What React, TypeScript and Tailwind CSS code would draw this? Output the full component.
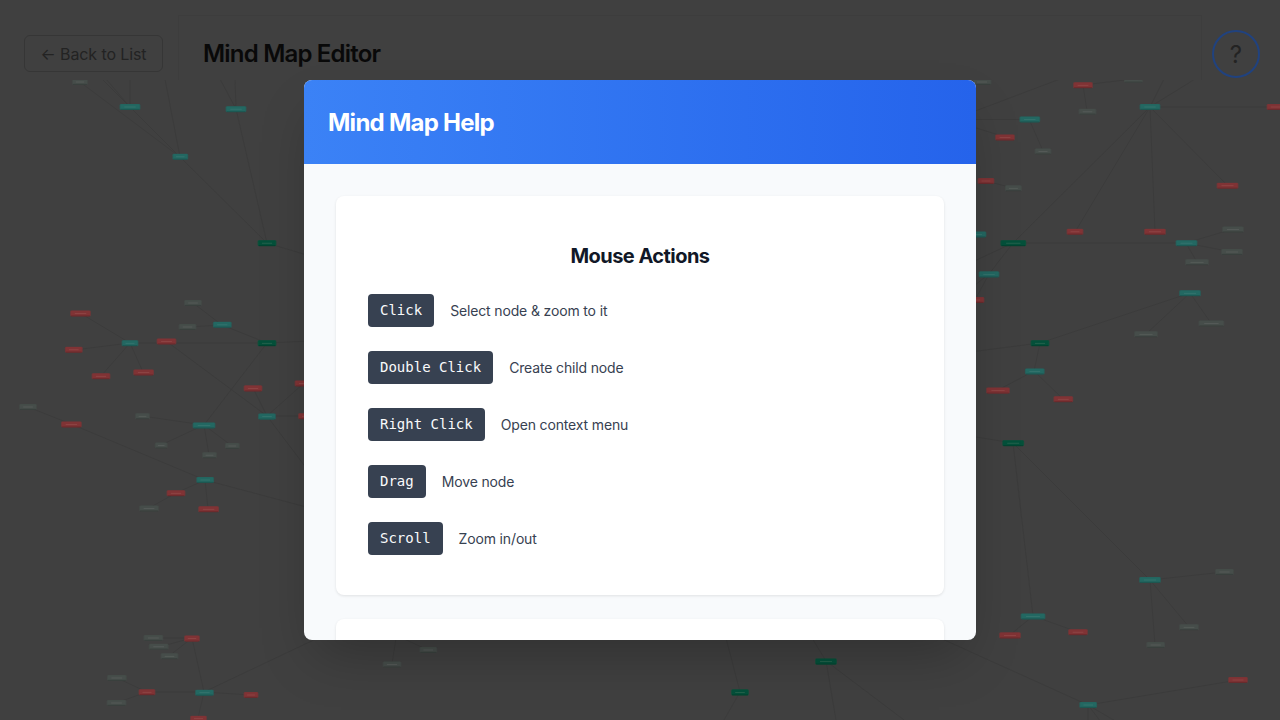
type Kind = 'g' | 't' | 'r' | 'n';
type MapNode = [x: number, y: number, width: number, kind: Kind];
type Edge = [number, number, number, number];

const FILLS: Record<Kind, string> = {
  g: '#04503a',
  t: '#236862',
  r: '#803335',
  n: '#464d4a',
};
const RIMS: Record<Kind, string> = {
  g: '#12503b',
  t: '#295c58',
  r: '#6e3738',
  n: '#434946',
};
const LABELS: Record<Kind, string> = {
  g: '#2b6650',
  t: '#38756f',
  r: '#904848',
  n: '#585e5b',
};

const NODES: MapNode[] = [
  [80, 82, 14, 'n'], [130, 107, 19, 't'], [180.3, 156.8, 14, 't'], [236, 109.2, 19, 't'],
  [267, 243.2, 17, 'g'], [80.5, 313.5, 19, 'r'], [73.8, 349.8, 16, 'r'], [130, 343.3, 15, 't'],
  [166.5, 341.5, 18, 'r'], [193, 303, 16, 'n'], [187.5, 327, 16, 'n'], [222.3, 324.8, 17, 't'],
  [267, 343.3, 17, 'g'], [101, 376.3, 17, 'r'], [143.6, 372.5, 19, 'r'], [28, 407, 16, 'n'],
  [71.4, 424.5, 19, 'r'], [142.5, 416.3, 13, 'n'], [204, 425.5, 21, 't'], [161.2, 445.5, 11, 'n'],
  [209.5, 455.2, 13, 'n'], [232.3, 446, 13, 'n'], [205.2, 480, 16, 't'], [176, 493.3, 17, 'r'],
  [149, 508.5, 18, 'n'], [208.6, 509.3, 19, 'r'], [253, 388.4, 17, 'r'], [267, 416.6, 16, 't'],
  [304, 383.5, 17, 'r'], [306.5, 416.2, 15, 'r'], [153.4, 638, 18, 'n'], [158.7, 646.8, 18, 'n'],
  [169.5, 656.3, 16, 'n'], [192, 638.6, 14, 'r'], [116.8, 678, 18, 'n'], [116.5, 703, 18, 'n'],
  [147, 692.3, 15, 'r'], [204.5, 692.7, 17, 't'], [251, 695, 13, 'r'], [198.5, 718.7, 15, 'r'],
  [982, 82, 17, 'n'], [1083, 85.3, 18, 'r'], [1133.4, 79.7, 17, 'n'], [1087.5, 111.8, 16, 'n'],
  [1029.8, 119.5, 19, 't'], [1005, 137.5, 18, 'r'], [1043, 151.5, 15, 'n'], [1150, 107, 19, 't'],
  [1276, 107, 17, 'r'], [986, 181, 15, 'r'], [1013.4, 188.3, 15, 'n'], [1227.5, 185.7, 20, 'r'],
  [1075, 231.8, 15, 'r'], [1155, 231.8, 20, 'r'], [977, 234.5, 17, 't'], [1013.3, 243.2, 24, 'g'],
  [1186.5, 243.2, 20, 't'], [1233, 229.5, 20, 'n'], [1232, 252, 20, 'n'], [1197, 262.3, 22, 'n'],
  [989, 274.4, 19, 't'], [975, 300, 17, 'r'], [1190, 293.3, 20, 't'], [1211.4, 323.5, 24, 'n'],
  [1146, 334.3, 22, 'n'], [1040, 343.3, 17, 'g'], [1034.8, 371.5, 18, 't'], [998, 390.6, 22, 'r'],
  [1063.3, 399.3, 18, 'r'], [1013.2, 443.2, 20, 'g'], [1150, 580, 20, 't'], [1224.5, 572, 17, 'n'],
  [1189, 627.3, 18, 'n'], [1155.7, 645, 17, 'n'], [1033, 616.5, 23, 't'], [1010, 635.4, 20, 'r'],
  [1078, 632.2, 18, 'r'], [1238, 680, 18, 'r'], [1088.2, 705, 16, 't'], [428.3, 650, 16, 'n'],
  [392, 664.5, 17, 'n'], [740, 692.4, 16, 'g'], [826, 661.6, 20, 'g'],
];

const EDGES: Edge[] = [
  [80, 82, 180, 157], [102, 79, 180, 157], [106, 79, 130, 107], [130, 79, 130, 107],
  [165, 79, 180, 157], [220, 79, 236, 109], [235, 79, 236, 109], [180, 157, 267, 243],
  [236, 109, 267, 243], [267, 243, 310, 256], [80, 313, 130, 343], [74, 350, 130, 343],
  [130, 343, 267, 343], [130, 343, 101, 376], [130, 343, 143, 372], [166, 341, 267, 416],
  [193, 303, 222, 325], [187, 327, 222, 325], [222, 325, 267, 343], [267, 343, 310, 341],
  [267, 343, 204, 425], [28, 407, 71, 424], [71, 424, 205, 480], [142, 416, 204, 425],
  [161, 445, 204, 425], [209, 455, 204, 425], [232, 446, 204, 425], [205, 480, 176, 493],
  [176, 493, 149, 508], [205, 480, 208, 509], [205, 480, 310, 508], [253, 388, 267, 416],
  [304, 383, 267, 416], [267, 416, 306, 416], [267, 416, 310, 473], [153, 638, 192, 638],
  [159, 647, 192, 638], [169, 656, 192, 638], [192, 638, 204, 692], [117, 678, 147, 692],
  [116, 703, 147, 692], [147, 692, 204, 692], [204, 692, 251, 695], [204, 692, 198, 718],
  [204, 692, 318, 638], [396, 638, 392, 664], [402, 638, 428, 650], [726, 638, 740, 692],
  [740, 692, 724, 720], [812, 638, 826, 661], [826, 661, 836, 720], [826, 661, 904, 720],
  [940, 638, 1088, 705], [970, 113, 1060, 79], [970, 119.5, 1029, 119.5], [970, 126, 1005, 137],
  [1029, 119, 1043, 151], [1083, 85, 1133, 79], [1083, 85, 1087, 111], [1164, 79, 1150, 107],
  [1195, 79, 1150, 107], [1150, 107, 1276, 107], [1150, 107, 1013, 243], [1150, 107, 1075, 232],
  [1150, 107, 1155, 232], [1150, 107, 1227, 185], [986, 181, 1013, 188], [1013, 243, 1186, 243],
  [1013, 243, 970, 263], [1013, 243, 989, 274], [989, 274, 970, 289], [989, 274, 975, 300],
  [1186, 243, 1233, 229], [1186, 243, 1232, 252], [1186, 243, 1197, 262], [1190, 293, 1211, 323],
  [1190, 293, 1146, 334], [1190, 293, 1040, 343], [1040, 343, 970, 352], [1040, 343, 1034, 371],
  [1034, 371, 998, 390], [1034, 371, 1063, 399], [970, 436, 1013, 443], [1013, 443, 1033, 616],
  [1013, 443, 1150, 580], [1150, 580, 1224, 572], [1150, 580, 1189, 627], [1150, 580, 1155, 645],
  [1033, 616, 1010, 635], [1033, 616, 1078, 632], [1088, 705, 1238, 680], [1088, 705, 1088, 722],
  [1088, 705, 1101, 722], [1088, 705, 1117, 722],
];

const ACTIONS = [
  { keys: 'Click', text: 'Select node & zoom to it' },
  { keys: 'Double Click', text: 'Create child node' },
  { keys: 'Right Click', text: 'Open context menu' },
  { keys: 'Drag', text: 'Move node' },
  { keys: 'Scroll', text: 'Zoom in/out' },
];

function EditorHeader() {
  return (
    <header className="flex h-20 shrink-0 text-[#232323]">
      <div className="w-[178px] pl-6 pt-[35px]">
        <button className="h-[37px] w-[139px] whitespace-nowrap rounded-md border border-[#363636] text-center text-[16px] leading-[37px] tracking-[-0.1px]">
          ← Back to List
        </button>
      </div>
      <div className="mt-[15px] flex-1 border border-b-0 border-[#3d3d3d] pl-6 pt-[20px]">
        <h1 className="text-[24px] font-semibold leading-9 tracking-[-0.8px] text-[#090909]">Mind Map Editor</h1>
      </div>
      <div className="w-[78px] pl-[10px] pt-[29.5px]">
        <button className="flex size-12 items-center justify-center rounded-full border-2 border-[#20427f] pt-[2px] text-[24px]">
          ?
        </button>
      </div>
    </header>
  );
}

function MindMap() {
  return (
    <svg className="block h-[640px] w-[1280px]" viewBox="0 80 1280 640">
      {EDGES.map(([x1, y1, x2, y2], i) => (
        <line key={i} x1={x1} y1={y1} x2={x2} y2={y2} stroke="#3b3b3b" strokeWidth="0.9" />
      ))}
      {NODES.map(([x, y, w, kind], i) => (
        <g key={i}>
          <rect x={x - w / 2 - 0.9} y={y - 3} width={w + 1.8} height={6} rx={1.4} fill={RIMS[kind]} />
          <rect x={x - w / 2} y={y - 2.8} width={w} height={5.6} rx={0.8} fill={FILLS[kind]} />
          <rect x={x - w / 2} y={y + 1.8} width={w} height={1.2} rx={0.6} fill="#000000" fillOpacity={0.15} />
          <rect x={x - w * 0.3} y={y - 0.4} width={w * 0.6} height={0.8} fill={LABELS[kind]} />
        </g>
      ))}
    </svg>
  );
}

function HelpDialog() {
  return (
    <div className="absolute inset-0 flex items-center justify-center">
      <section
        role="dialog"
        className="flex h-[560px] w-[672px] flex-col overflow-hidden rounded-lg bg-[#f8fafc] shadow-[0_25px_50px_-12px_rgba(0,0,0,0.25)]"
      >
        <div className="h-[84px] shrink-0 bg-linear-to-r from-[#3b82f6] to-[#2563eb] px-6 pt-[25px]">
          <h2 className="text-[24px] font-bold leading-9 tracking-[-0.74px] text-white">Mind Map Help</h2>
        </div>
        <div className="flex min-h-0 flex-1 flex-col gap-6 overflow-hidden p-8">
          <div className="h-[399px] shrink-0 rounded-lg bg-white px-8 pt-[45px] shadow-[0_1px_3px_rgba(0,0,0,0.1)]">
            <h3 className="text-center text-[20px] font-bold leading-[30px] tracking-[-0.55px] text-[#111827]">
              Mouse Actions
            </h3>
            <ul className="mt-[23px] flex flex-col gap-6">
              {ACTIONS.map((action) => (
                <li key={action.keys} className="flex h-[33px] items-center gap-4">
                  <kbd className="h-[33px] rounded bg-[#374151] px-3 font-['DejaVu_Sans_Mono',monospace] text-[14px] leading-[33px] text-[#f9fafb]">
                    {action.keys}
                  </kbd>
                  <span className="text-[14px] leading-[21px] tracking-[-0.15px] text-[#374151]">{action.text}</span>
                </li>
              ))}
            </ul>
          </div>
          <div className="h-40 shrink-0 rounded-lg bg-white shadow-[0_1px_3px_rgba(0,0,0,0.1)]" />
        </div>
      </section>
    </div>
  );
}

export default function App() {
  return (
    <main className="relative flex h-[720px] w-[1280px] flex-col overflow-hidden bg-[#404040] font-[Inter,sans-serif]">
      <EditorHeader />
      <MindMap />
      <HelpDialog />
    </main>
  );
}
